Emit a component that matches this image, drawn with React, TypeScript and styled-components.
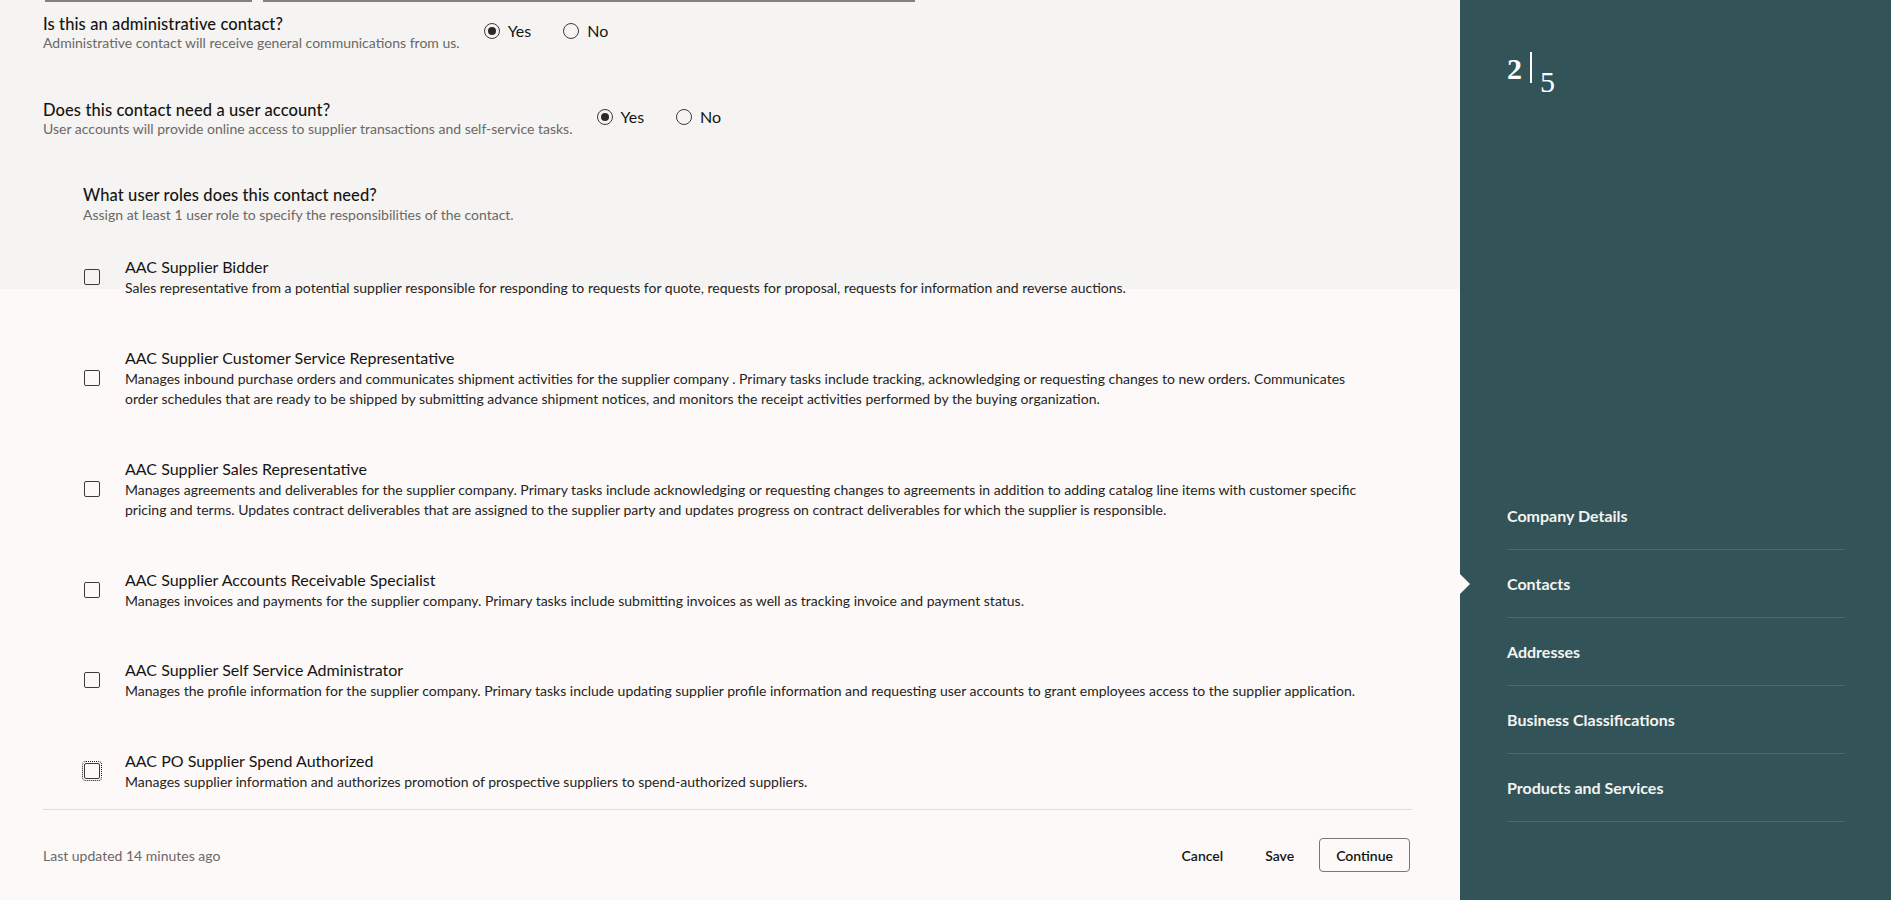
import React from "react";
import styled, { createGlobalStyle } from "styled-components";

const GlobalStyle = createGlobalStyle`
  html, body {
    margin: 0;
    padding: 0;
  }
  body {
    font-family: Lato, "Noto Sans", "Liberation Sans", sans-serif;
    color: #161513;
  }
`;

const Page = styled.div`
  display: flex;
  width: 1891px;
  height: 900px;
  overflow: hidden;
`;

const Main = styled.main`
  flex: 1;
  display: flex;
  flex-direction: column;
  padding: 0 48px 0 43px;
  background: linear-gradient(#f5f4f2 0 289px, #fcf9f8 289px);
`;

const FieldRow = styled.div`
  display: flex;
  gap: 11px;
  margin-left: 2px;
`;

const FieldStub = styled.div<{ $w: number }>`
  width: ${(p) => p.$w}px;
  height: 2px;
  background: #85827e;
`;

const QuestionRow = styled.div<{ $top: number }>`
  display: flex;
  align-items: flex-start;
  gap: 24px;
  margin-top: ${(p) => p.$top}px;
`;

const TextBlock = styled.div`
  display: flex;
  flex-direction: column;
`;

const Question = styled.div`
  font-size: 16.5px;
  line-height: 20px;
  font-weight: 500;
  letter-spacing: 0.1px;
  color: #161513;
`;

const Hint = styled.div`
  font-size: 14px;
  line-height: 18px;
  color: #6b6865;
`;

const RadioGroup = styled.div`
  display: flex;
  gap: 32px;
  padding-top: 9px;
`;

const RadioOption = styled.label`
  display: flex;
  align-items: center;
  gap: 8px;
  font-size: 16px;
  line-height: 16px;
  color: #161513;
`;

const RadioCircle = styled.span<{ $on?: boolean }>`
  width: 14px;
  height: 14px;
  border: 1px solid #3d3b38;
  border-radius: 50%;
  display: flex;
  align-items: center;
  justify-content: center;

  &::after {
    content: "";
    width: 8px;
    height: 8px;
    border-radius: 50%;
    background: ${(p) => (p.$on ? "#2b2927" : "transparent")};
  }
`;

const RolesHeader = styled.div`
  margin-top: 46px;
  padding-left: 40px;
`;

const RolesTitle = styled.div`
  font-size: 16.5px;
  line-height: 22px;
  font-weight: 500;
  letter-spacing: 0.1px;
`;

const RoleList = styled.div`
  display: flex;
  flex-direction: column;
  gap: 48px;
  margin-top: 32px;
  padding: 0 40px 0 41px;
`;

const RoleItem = styled.div`
  display: flex;
  align-items: center;
  gap: 25px;
`;

const CheckBox = styled.span<{ $focus?: boolean }>`
  flex: none;
  width: 14px;
  height: 14px;
  border: 1px solid #3d3b38;
  border-radius: 2px;
  outline: ${(p) => (p.$focus ? "1px dotted #161513" : "none")};
  outline-offset: 1px;
`;

const RoleText = styled.div`
  display: flex;
  flex-direction: column;
`;

const RoleName = styled.div`
  font-size: 16px;
  line-height: 22px;
  color: #161513;
`;

const RoleDesc = styled.div`
  font-size: 14px;
  line-height: 20.5px;
  color: #262422;
`;

const Divider = styled.hr`
  margin: 17px 0 0;
  border: none;
  border-top: 1px solid #e0ddda;
`;

const Footer = styled.div`
  display: flex;
  align-items: center;
  justify-content: space-between;
  margin-top: 28px;
`;

const Updated = styled.div`
  font-size: 14px;
  color: #6b6865;
`;

const Actions = styled.div`
  display: flex;
  gap: 8px;
  margin-right: 2px;
`;

const ActionButton = styled.button<{ $outlined?: boolean }>`
  height: 34px;
  padding: 0 16px;
  font-family: inherit;
  font-size: 14px;
  font-weight: 600;
  color: #161513;
  background: transparent;
  border: 1px solid ${(p) => (p.$outlined ? "#7a7672" : "transparent")};
  border-radius: 4px;
`;

const Sidebar = styled.aside`
  width: 431px;
  flex: none;
  display: flex;
  flex-direction: column;
  padding: 0 46px 78px 47px;
  box-sizing: border-box;
  background: #325358;
  color: #f5f3f1;
`;

const StepCounter = styled.div`
  display: flex;
  align-items: flex-start;
  margin-top: 52px;
  font-family: "Liberation Serif", "DejaVu Serif", serif;
  font-weight: 700;
  font-size: 30px;
  line-height: 1;
  color: #ffffff;
`;

const StepNow = styled.span`
  margin-top: 2px;
`;

const StepBar = styled.span`
  width: 2px;
  height: 31px;
  margin: 0 8px 0 8px;
  background: #ffffff;
`;

const StepTotal = styled.span`
  margin-top: 15px;
  font-weight: 400;
`;

const Nav = styled.nav`
  margin-top: auto;
  display: flex;
  flex-direction: column;
`;

const NavItem = styled.div<{ $active?: boolean }>`
  position: relative;
  height: 67px;
  display: flex;
  align-items: center;
  border-bottom: 1px solid rgba(255, 255, 255, 0.12);
  font-size: 16px;
  font-weight: 700;
  color: #f5f3f1;

  &::before {
    content: "";
    display: ${(p) => (p.$active ? "block" : "none")};
    position: absolute;
    left: -47px;
    top: 50%;
    margin-top: -10px;
    border-left: 10px solid #fcf9f8;
    border-top: 10px solid transparent;
    border-bottom: 10px solid transparent;
  }
`;

const roles = [
  {
    name: "AAC Supplier Bidder",
    desc: "Sales representative from a potential supplier responsible for responding to requests for quote, requests for proposal, requests for information and reverse auctions.",
  },
  {
    name: "AAC Supplier Customer Service Representative",
    desc: "Manages inbound purchase orders and communicates shipment activities for the supplier company . Primary tasks include tracking, acknowledging or requesting changes to new orders. Communicates order schedules that are ready to be shipped by submitting advance shipment notices, and monitors the receipt activities performed by the buying organization.",
  },
  {
    name: "AAC Supplier Sales Representative",
    desc: "Manages agreements and deliverables for the supplier company. Primary tasks include acknowledging or requesting changes to agreements in addition to adding catalog line items with customer specific pricing and terms. Updates contract deliverables that are assigned to the supplier party and updates progress on contract deliverables for which the supplier is responsible.",
  },
  {
    name: "AAC Supplier Accounts Receivable Specialist",
    desc: "Manages invoices and payments for the supplier company. Primary tasks include submitting invoices as well as tracking invoice and payment status.",
  },
  {
    name: "AAC Supplier Self Service Administrator",
    desc: "Manages the profile information for the supplier company. Primary tasks include updating supplier profile information and requesting user accounts to grant employees access to the supplier application.",
  },
  {
    name: "AAC PO Supplier Spend Authorized",
    desc: "Manages supplier information and authorizes promotion of prospective suppliers to spend-authorized suppliers.",
  },
];

const steps = [
  "Company Details",
  "Contacts",
  "Addresses",
  "Business Classifications",
  "Products and Services",
];

function YesNo() {
  return (
    <RadioGroup>
      <RadioOption>
        <RadioCircle $on />
        Yes
      </RadioOption>
      <RadioOption>
        <RadioCircle />
        No
      </RadioOption>
    </RadioGroup>
  );
}

export default function App() {
  return (
    <>
      <GlobalStyle />
      <Page>
        <Main>
          <FieldRow>
            <FieldStub $w={207} />
            <FieldStub $w={652} />
          </FieldRow>

          <QuestionRow $top={12}>
            <TextBlock>
              <Question>Is this an administrative contact?</Question>
              <Hint>Administrative contact will receive general communications from us.</Hint>
            </TextBlock>
            <YesNo />
          </QuestionRow>

          <QuestionRow $top={48}>
            <TextBlock>
              <Question>Does this contact need a user account?</Question>
              <Hint>User accounts will provide online access to supplier transactions and self-service tasks.</Hint>
            </TextBlock>
            <YesNo />
          </QuestionRow>

          <RolesHeader>
            <RolesTitle>What user roles does this contact need?</RolesTitle>
            <Hint>Assign at least 1 user role to specify the responsibilities of the contact.</Hint>
          </RolesHeader>

          <RoleList>
            {roles.map((r, i) => (
              <RoleItem key={r.name}>
                <CheckBox $focus={i === roles.length - 1} />
                <RoleText>
                  <RoleName>{r.name}</RoleName>
                  <RoleDesc>{r.desc}</RoleDesc>
                </RoleText>
              </RoleItem>
            ))}
          </RoleList>

          <Divider />

          <Footer>
            <Updated>Last updated 14 minutes ago</Updated>
            <Actions>
              <ActionButton>Cancel</ActionButton>
              <ActionButton>Save</ActionButton>
              <ActionButton $outlined>Continue</ActionButton>
            </Actions>
          </Footer>
        </Main>

        <Sidebar>
          <StepCounter>
            <StepNow>2</StepNow>
            <StepBar />
            <StepTotal>5</StepTotal>
          </StepCounter>
          <Nav>
            {steps.map((s) => (
              <NavItem key={s} $active={s === "Contacts"}>
                {s}
              </NavItem>
            ))}
          </Nav>
        </Sidebar>
      </Page>
    </>
  );
}
